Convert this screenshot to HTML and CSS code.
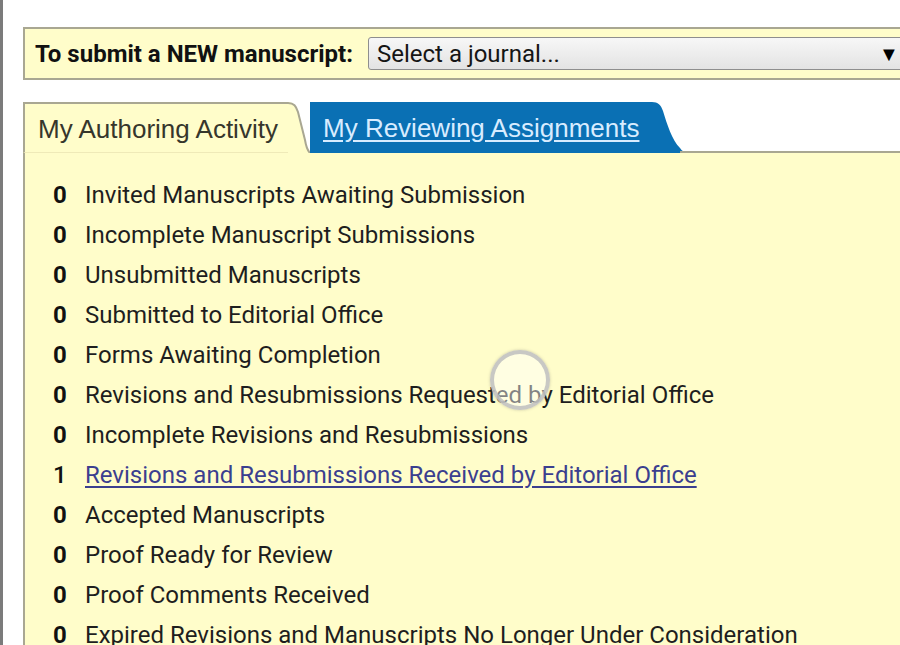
FILE: index.html
```html
<!DOCTYPE html>
<html>
<head>
<meta charset="utf-8">
<link rel="stylesheet" href="styles.css">
</head>
<body>
<div class="page">
  <div class="submit-box">
    <span class="submit-label">To submit a NEW manuscript:</span>
    <div class="select">
      <span class="select-text">Select a journal...</span>
      <span class="select-arrow">&#9660;</span>
    </div>
  </div>

  <div class="tabs">
    <div class="tab-own">My Authoring Activity</div>
    <svg class="tab-join" width="22" height="51" viewBox="0 0 22 51">
      <path d="M0,0 C6,0 8,4 10,10 L17,38 C18,44 20,49 22,51 L0,51 Z" fill="#fffdca"/>
      <path d="M0,1 C6,1 8,4 10,10 L17,38 C18,44 20,49 22,51" fill="none" stroke="#a9a792" stroke-width="2"/>
    </svg>
    <div class="tab-other"><a href="#">My Reviewing Assignments</a></div>
    <svg class="tab-end" width="35" height="51" viewBox="0 0 35 51">
      <path d="M0,0 C6,0 9,3 11,9 C15,22 20,38 28,46 C30,49 32,50 35,50 L35,51 L0,51 Z" fill="#0a70b4"/>
      <path d="M28,50 L35,50" stroke="#a9a792" stroke-width="2"/>
    </svg>
    <div class="tab-fill"></div>
  </div>

  <div class="panel">
    <ul class="counts">
      <li><b>0</b><span>Invited Manuscripts Awaiting Submission</span></li>
      <li><b>0</b><span>Incomplete Manuscript Submissions</span></li>
      <li><b>0</b><span>Unsubmitted Manuscripts</span></li>
      <li><b>0</b><span>Submitted to Editorial Office</span></li>
      <li><b>0</b><span>Forms Awaiting Completion</span></li>
      <li><b>0</b><span>Revisions and Resubmissions Requested by Editorial Office</span></li>
      <li><b>0</b><span>Incomplete Revisions and Resubmissions</span></li>
      <li><b class="one">1</b><a href="#">Revisions and Resubmissions Received by Editorial Office</a></li>
      <li><b>0</b><span>Accepted Manuscripts</span></li>
      <li><b>0</b><span>Proof Ready for Review</span></li>
      <li><b>0</b><span>Proof Comments Received</span></li>
      <li><b>0</b><span>Expired Revisions and Manuscripts No Longer Under Consideration</span></li>
    </ul>
  </div>
  <div class="spinner"></div>
</div>
</body>
</html>
```

FILE: styles.css
```css
html, body {
  margin: 0;
  padding: 0;
  background: #ffffff;
  overflow: hidden;
}
.page {
  position: relative;
  height: 645px;
  box-sizing: border-box;
  border-left: 3px solid #7b7b7b;
  padding: 27px 0 0 20px;
  font-family: Roboto, "Liberation Sans", sans-serif;
  color: #1e1e1e;
  overflow: hidden;
}
.submit-box {
  display: flex;
  align-items: center;
  width: 900px;
  height: 53px;
  box-sizing: border-box;
  background: #fffdca;
  border: 2px solid #a9a792;
  padding-left: 10px;
}
.submit-label {
  font-weight: 700;
  font-size: 24px;
  color: #111;
  width: 333px;
  flex: none;
}
.select {
  flex: none;
  display: flex;
  align-items: center;
  width: 560px;
  height: 33px;
  box-sizing: border-box;
  border: 1px solid #8e8e8e;
  border-radius: 3px;
  background: linear-gradient(#f7f7f7, #e3e3e3);
  padding-left: 8px;
}
.select-text {
  font-size: 24px;
  color: #151515;
  width: 502px;
}
.select-arrow {
  font-size: 20px;
  color: #000;
}
.tabs {
  display: flex;
  height: 51px;
  margin-top: 22px;
  width: 900px;
}
.tab-own {
  flex: none;
  width: 265px;
  box-sizing: border-box;
  background: #fffdca;
  border-top: 2px solid #a9a792;
  border-left: 2px solid #a9a792;
  border-bottom: 1px solid #efeab8;
  padding: 10px 0 0 13px;
  font-family: "Liberation Sans", Arial, sans-serif;
  font-size: 26px;
  color: #36362c;
  white-space: nowrap;
}
.tab-join, .tab-end {
  flex: none;
  display: block;
}
.tab-other {
  flex: none;
  width: 342px;
  box-sizing: border-box;
  background: #0a70b4;
  padding: 11px 0 0 13px;
  font-family: "Liberation Sans", Arial, sans-serif;
  font-size: 26px;
  white-space: nowrap;
}
.tab-other a {
  color: #d8ecff;
  text-decoration: underline;
  text-underline-offset: 3px;
}
.tab-fill {
  flex: 1;
  border-bottom: 2px solid #a9a792;
  height: 49px;
}
.panel {
  width: 900px;
  height: 500px;
  background: #fffdca;
  border-left: 2px solid #a9a792;
  box-sizing: border-box;
  padding: 22px 0 0 28px;
}
.counts {
  list-style: none;
  margin: 0;
  padding: 0;
}
.counts li {
  display: flex;
  height: 40px;
  line-height: 40px;
  font-size: 24px;
  white-space: nowrap;
}
.counts b {
  width: 32px;
  flex: none;
  font-weight: 700;
  color: #111;
}
.counts b.one {
  font-weight: 500;
}
.counts span {
  color: #1e1e1e;
}
.counts a {
  color: #3b3f8f;
  text-decoration: underline;
  text-underline-offset: 3px;
}
.spinner {
  position: absolute;
  left: 487px;
  top: 350px;
  width: 52px;
  height: 52px;
  border-radius: 50%;
  border: 4px solid rgba(190, 190, 190, 0.85);
  background: rgba(255, 255, 255, 0.45);
  box-shadow: 0 0 3px rgba(120, 120, 120, 0.4);
}
```
